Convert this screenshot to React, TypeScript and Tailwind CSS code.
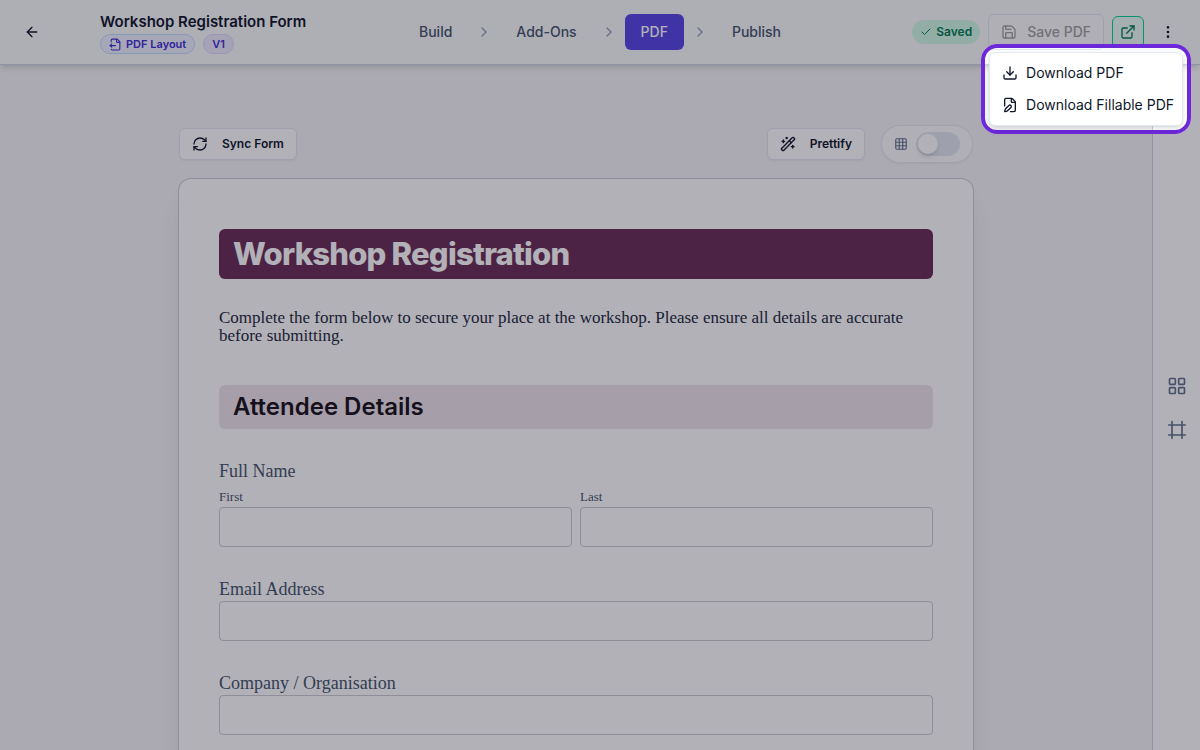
import { useState, type ReactNode } from 'react';
import {
  ArrowLeft,
  Check,
  ChevronRight,
  Download,
  EllipsisVertical,
  ExternalLink,
  FileOutput,
  FilePen,
  Frame,
  Grid3x3,
  LayoutGrid,
  RefreshCw,
  Save,
  WandSparkles,
} from 'lucide-react';

const steps = ['Build', 'Add-Ons', 'PDF', 'Publish'];

const fields = [
  { id: 'email', label: 'Email Address', type: 'email' },
  { id: 'company', label: 'Company / Organisation', type: 'text' },
];

const inputClass = 'block w-full h-10 px-3 rounded border border-[#cccbd1] bg-white';

function ToolButton({ icon, children }: { icon: ReactNode; children: ReactNode }) {
  return (
    <button className="flex h-8 items-center gap-3.5 rounded-md border border-slate-200 bg-white px-3 text-xs font-semibold text-slate-900 shadow-xs">
      {icon}
      {children}
    </button>
  );
}

function Header() {
  return (
    <header className="relative z-10 flex h-[65px] shrink-0 items-center border-b border-slate-300 bg-[#fafbfd] px-4 shadow-md">
      <div className="flex flex-1 items-center gap-[52px]">
        <button aria-label="Back" className="flex size-8 items-center justify-center text-slate-900">
          <ArrowLeft size={16} />
        </button>
        <div>
          <h1 className="text-[15px] leading-6 font-semibold text-slate-900">Workshop Registration Form</h1>
          <div className="flex gap-2 text-[11px] leading-none font-semibold">
            <span className="flex h-5 items-center gap-1 rounded-full border border-blue-200 bg-indigo-50 px-2 text-indigo-700">
              <FileOutput size={13} /> PDF Layout
            </span>
            <span className="flex h-5 items-center rounded-full border border-violet-200 bg-violet-100 px-2 text-indigo-700">V1</span>
          </div>
        </div>
      </div>

      <nav className="flex items-center gap-2 text-sm font-medium text-slate-600">
        {steps.map((step, i) => (
          <div key={step} className="flex items-center gap-2">
            {i > 0 && <ChevronRight size={16} className="text-slate-400" />}
            <a
              href="#"
              className={
                step === 'PDF'
                  ? 'flex h-9 items-center rounded-md bg-[#5646e5] px-4 text-white'
                  : 'flex h-9 items-center rounded-md px-4'
              }
            >
              {step}
            </a>
          </div>
        ))}
      </nav>

      <div className="flex flex-1 items-center justify-end gap-2">
        <span className="flex h-6 items-center gap-1 rounded-full bg-emerald-100 px-2 text-xs font-semibold text-emerald-700">
          <Check size={12} /> Saved
        </span>
        <button disabled className="flex h-9 items-center gap-2.5 rounded-md border border-slate-200 bg-white/50 px-3 text-sm font-medium text-neutral-400">
          <Save size={16} /> Save PDF
        </button>
        <button aria-label="Open preview" className="flex size-8 items-center justify-center rounded-md border border-emerald-400 bg-emerald-50 text-emerald-700">
          <ExternalLink size={16} />
        </button>
        <div className="relative">
          <button aria-label="More options" className="flex size-8 items-center justify-center text-slate-900">
            <EllipsisVertical size={16} />
          </button>
          <Menu />
        </div>
      </div>
    </header>
  );
}

// The outer ring's spread shadow dims everything around the open menu.
function Menu() {
  return (
    <div className="absolute top-7 -right-[7px] rounded-2xl border-4 border-[#6d28d9] p-1 shadow-[0_0_0_9999px_rgba(15,12,30,0.32)]">
      <div role="menu" className="rounded-md border border-slate-200 bg-white p-1 text-sm whitespace-nowrap text-slate-900 shadow-md">
        <button role="menuitem" className="flex h-8 w-full items-center gap-2 pr-1 pl-2">
          <Download size={16} /> Download PDF
        </button>
        <button role="menuitem" className="flex h-8 w-full items-center gap-2 pr-1 pl-2">
          <FilePen size={16} /> Download Fillable PDF
        </button>
      </div>
    </div>
  );
}

function Toolbar() {
  const [grid, setGrid] = useState(false);

  return (
    <div className="flex items-center justify-between">
      <ToolButton icon={<RefreshCw size={16} />}>Sync Form</ToolButton>
      <div className="flex items-center gap-4">
        <ToolButton icon={<WandSparkles size={16} />}>Prettify</ToolButton>
        <label className="flex h-[38px] items-center gap-2 rounded-full border border-slate-200 bg-white/70 px-3 text-slate-500 shadow-xs">
          <Grid3x3 size={14} />
          <input
            type="checkbox"
            aria-label="Show grid"
            checked={grid}
            onChange={(e) => setGrid(e.target.checked)}
            className="peer sr-only"
          />
          <span className="flex h-6 w-11 items-center rounded-full bg-slate-200 px-0.5 peer-checked:justify-end peer-checked:bg-indigo-600">
            <span className="size-5 rounded-full bg-white shadow-md" />
          </span>
        </label>
      </div>
    </div>
  );
}

function FormPage() {
  return (
    <form className="mt-4 min-h-screen rounded-xl bg-white px-10 pt-[50px] pb-10 font-['Liberation_Serif',serif] shadow-xl ring-1 ring-[#cccbd1]">
      <h2 className="flex h-[50px] items-center rounded-md bg-[#6b2f57] px-3.5 font-[Inter,sans-serif] text-[31px] font-extrabold tracking-tight text-white">
        Workshop Registration
      </h2>
      <p className="mt-[30px] text-[17px] leading-[18px] text-slate-800">
        Complete the form below to secure your place at the workshop. Please ensure all details are accurate before submitting.
      </p>
      <h3 className="mt-10 flex h-11 items-center rounded-md bg-[#ede4eb] px-3.5 font-[Inter,sans-serif] text-2xl font-semibold text-[#18121b]">
        Attendee Details
      </h3>

      <fieldset className="mt-[30px]">
        <legend className="text-lg leading-6 text-slate-600">Full Name</legend>
        <div className="mt-1 grid grid-cols-2 gap-2">
          <div>
            <label htmlFor="first" className="block text-[13px] leading-5 text-slate-600">First</label>
            <input id="first" className={inputClass} />
          </div>
          <div>
            <label htmlFor="last" className="block text-[13px] leading-5 text-slate-600">Last</label>
            <input id="last" className={inputClass} />
          </div>
        </div>
      </fieldset>

      {fields.map((field) => (
        <div key={field.id} className="mt-[30px]">
          <label htmlFor={field.id} className="block text-lg leading-6 text-slate-600">{field.label}</label>
          <input id={field.id} type={field.type} className={inputClass} />
        </div>
      ))}
    </form>
  );
}

export default function App() {
  return (
    <div className="flex h-screen flex-col overflow-hidden bg-[#f5f4f6] font-[Inter,sans-serif]">
      <Header />
      <div className="flex min-h-0 flex-1">
        <main className="min-w-0 flex-1 overflow-hidden px-6 pt-[60px]">
          <div className="mx-auto max-w-[794px]">
            <Toolbar />
            <FormPage />
          </div>
        </main>
        <aside className="flex w-12 shrink-0 flex-col items-center justify-center gap-6 border-l border-slate-300 bg-white text-slate-500">
          <button aria-label="Elements"><LayoutGrid size={20} /></button>
          <button aria-label="Page frame"><Frame size={20} /></button>
        </aside>
      </div>
    </div>
  );
}
